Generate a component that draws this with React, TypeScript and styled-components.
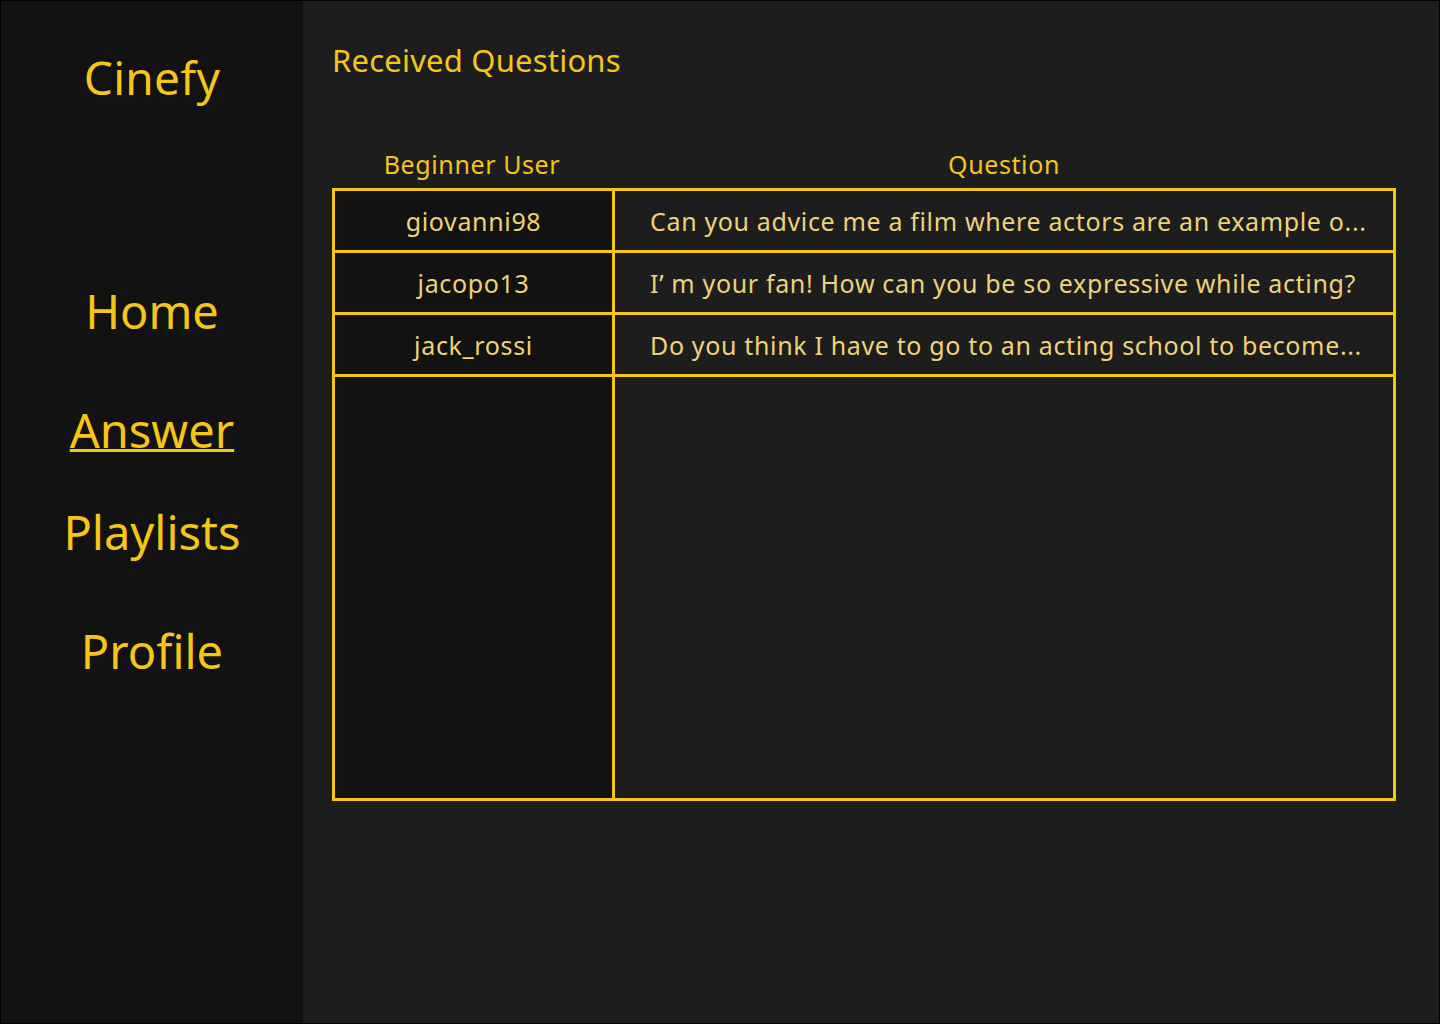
import React from "react";
import styled, { createGlobalStyle } from "styled-components";

const Global = createGlobalStyle`
  html, body { margin: 0; padding: 0; background: #1d1d1d; }
  * { box-sizing: border-box; }
  body { font-family: "Noto Sans", "Open Sans", sans-serif; }
`;

const Frame = styled.div`
  width: 1440px;
  height: 1024px;
  border: 1px solid #000;
  display: flex;
  background: #1d1d1d;
  overflow: hidden;
`;

const Sidebar = styled.aside`
  width: 302px;
  flex-shrink: 0;
  background: #121212;
  display: flex;
  flex-direction: column;
  align-items: center;
`;

const Logo = styled.div`
  margin-top: 44px;
  font-size: 46px;
  line-height: 64px;
  letter-spacing: 0.3px;
  color: #f5c518;
`;

const Nav = styled.nav`
  margin-top: 170px;
  display: flex;
  flex-direction: column;
  align-items: center;
`;

const NavItem = styled.a<{ $active?: boolean; $gap: number }>`
  margin-top: ${(p) => p.$gap}px;
  font-size: 47px;
  line-height: 64px;
  color: #f5c518;
  text-decoration: ${(p) => (p.$active ? "underline" : "none")};
  text-decoration-thickness: 3px;
  text-underline-offset: 1px;
  cursor: pointer;
`;

const Main = styled.main`
  flex: 1;
  padding: 41px 44px 0 29px;
  display: flex;
  flex-direction: column;
`;

const Title = styled.h1`
  margin: 0;
  font-weight: 400;
  font-size: 31px;
  line-height: 36px;
  letter-spacing: 0.2px;
  color: #f5c518;
`;

const HeaderRow = styled.div`
  margin-top: 71px;
  display: grid;
  grid-template-columns: 280px 1fr;
  padding-bottom: 9px;
`;

const HeaderCell = styled.div`
  text-align: center;
  font-size: 25px;
  line-height: 30px;
  letter-spacing: 0.6px;
  color: #f5c518;
`;

const Grid = styled.div`
  width: 1064px;
  display: grid;
  grid-template-columns: 277px 1fr;
  grid-template-rows: 59px 59px 59px 421px;
  gap: 3px;
  padding: 3px;
  background: #f5c518;
`;

const UserCell = styled.div`
  background: #121212;
  display: flex;
  align-items: center;
  justify-content: center;
  font-size: 25px;
  letter-spacing: 0.65px;
  color: #f0d276;
`;

const QuestionCell = styled.div`
  background: #1d1d1d;
  display: flex;
  align-items: center;
  padding: 0 20px 0 35px;
  font-size: 25px;
  letter-spacing: 0.65px;
  white-space: nowrap;
  color: #f0d276;
  min-width: 0;
`;

const FillerLeft = styled.div`
  background: #121212;
`;

const FillerRight = styled.div`
  background: #1d1d1d;
`;

const rows = [
  { user: "giovanni98", q: "Can you advice me a film where actors are an example o..." },
  { user: "jacopo13", q: "I\u2019 m your fan! How can you be so expressive while acting?" },
  { user: "jack_rossi", q: "Do you think I have to go to an acting school to become..." },
];

export default function App() {
  return (
    <>
      <Global />
      <Frame>
        <Sidebar>
          <Logo>Cinefy</Logo>
          <Nav>
            <NavItem $gap={0}>Home</NavItem>
            <NavItem $gap={55} $active>Answer</NavItem>
            <NavItem $gap={38}>Playlists</NavItem>
            <NavItem $gap={55}>Profile</NavItem>
          </Nav>
        </Sidebar>
        <Main>
          <Title>Received Questions</Title>
          <HeaderRow>
            <HeaderCell>Beginner User</HeaderCell>
            <HeaderCell>Question</HeaderCell>
          </HeaderRow>
          <Grid>
            {rows.map((r) => (
              <React.Fragment key={r.user}>
                <UserCell>{r.user}</UserCell>
                <QuestionCell>{r.q}</QuestionCell>
              </React.Fragment>
            ))}
            <FillerLeft />
            <FillerRight />
          </Grid>
        </Main>
      </Frame>
    </>
  );
}
